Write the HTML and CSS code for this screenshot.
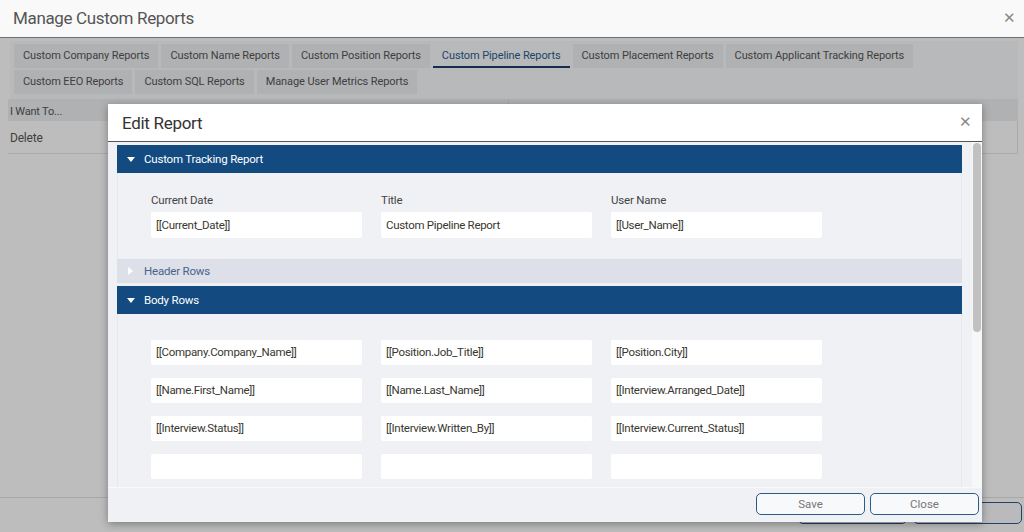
FILE: index.html
```html
<!DOCTYPE html>
<html lang="en">
<head>
<meta charset="UTF-8">
<title>Manage Custom Reports</title>
<link rel="stylesheet" href="styles.css">
</head>
<body>

<div class="outer">
  <div class="outer-head">
    <span class="outer-title">Manage Custom Reports</span>
    <span class="x-btn outer-x">&#x2715;</span>
  </div>

  <div class="outer-body">
    <div class="tabs">
      <div class="tab-row">
        <span class="tab">Custom Company Reports</span>
        <span class="tab">Custom Name Reports</span>
        <span class="tab">Custom Position Reports</span>
        <span class="tab active">Custom Pipeline Reports</span>
        <span class="tab">Custom Placement Reports</span>
        <span class="tab">Custom Applicant Tracking Reports</span>
      </div>
      <div class="tab-row">
        <span class="tab">Custom EEO Reports</span>
        <span class="tab">Custom SQL Reports</span>
        <span class="tab">Manage User Metrics Reports</span>
      </div>
    </div>

    <div class="grid-table">
      <div class="grid-head">
        <span>I Want To...</span>
        <span></span>
      </div>
      <div class="grid-row">Delete</div>
    </div>

    <div class="outer-foot">
      <button class="btn outer-btn">Save</button>
      <button class="btn outer-btn">Close</button>
    </div>

    <div class="backdrop"></div>
  </div>

  <div class="dialog">
    <div class="dialog-head">
      <span class="dialog-title">Edit Report</span>
      <span class="x-btn dialog-x">&#x2715;</span>
    </div>

    <div class="dialog-main">
      <div class="dialog-scroll">
        <div class="section-bar open">
          <svg class="caret" width="8" height="5" viewBox="0 0 8 5"><path d="M0 0h8L4 5z" fill="#fff"/></svg>
          Custom Tracking Report
        </div>
        <div class="section-body first">
          <div class="field">
            <label>Current Date</label>
            <div class="input">[[Current_Date]]</div>
          </div>
          <div class="field">
            <label>Title</label>
            <div class="input">Custom Pipeline Report</div>
          </div>
          <div class="field">
            <label>User Name</label>
            <div class="input">[[User_Name]]</div>
          </div>
        </div>

        <div class="section-bar closed">
          <svg class="caret" width="5" height="8" viewBox="0 0 5 8"><path d="M0 0v8l5-4z" fill="#fff"/></svg>
          Header Rows
        </div>

        <div class="section-bar open">
          <svg class="caret" width="8" height="5" viewBox="0 0 8 5"><path d="M0 0h8L4 5z" fill="#fff"/></svg>
          Body Rows
        </div>
        <div class="section-body rows">
          <div class="input">[[Company.Company_Name]]</div>
          <div class="input">[[Position.Job_Title]]</div>
          <div class="input">[[Position.City]]</div>
          <div class="input">[[Name.First_Name]]</div>
          <div class="input">[[Name.Last_Name]]</div>
          <div class="input">[[Interview.Arranged_Date]]</div>
          <div class="input">[[Interview.Status]]</div>
          <div class="input">[[Interview.Written_By]]</div>
          <div class="input">[[Interview.Current_Status]]</div>
          <div class="input"></div>
          <div class="input"></div>
          <div class="input"></div>
          <div class="input"></div>
          <div class="input"></div>
          <div class="input"></div>
        </div>
      </div>
      <div class="scrollbar"><div class="thumb"></div></div>
    </div>

    <div class="dialog-foot">
      <button class="btn">Save</button>
      <button class="btn">Close</button>
    </div>
  </div>
</div>

</body>
</html>
```

FILE: styles.css
```css
body {
  margin: 0;
  font-family: Roboto, "Liberation Sans", Arial, sans-serif;
  color: #555;
  background-color: #fdfdfe;
}
.outer {
  position: relative;
  height: 532px;
  display: flex;
  flex-direction: column;
  overflow: hidden;
}
.outer-head {
  height: 37px;
  flex: none;
  display: flex;
  align-items: center;
  justify-content: space-between;
  padding: 0 6px 0 13px;
  background-color: #f9f9f9;
  border-bottom: 1px solid #6e6e6e;
}
.outer-title {
  font-size: 17px;
  letter-spacing: -0.35px;
  color: #555;
  margin-top: -2px;
}
.x-btn {
  font-size: 15px;
  color: #888;
  line-height: 1;
}
.outer-x {
  margin-right: 2px;
}
.outer-body {
  position: relative;
  flex: 1;
  display: flex;
  flex-direction: column;
  padding: 3px 6px 0 8px;
}

/* tabs */
.tabs {
  background-color: #f6f7f9;
  padding: 3px 0 3px 4px;
  margin-left: 2px;
}
.tab-row {
  display: flex;
  gap: 3px;
  margin-bottom: 2px;
}
.tab {
  height: 24px;
  line-height: 24px;
  padding: 0 9px;
  font-size: 11px;
  letter-spacing: -0.1px;
  color: #555;
  background-color: #ebecef;
  white-space: nowrap;
}
.tab.active {
  background-color: transparent;
  color: #2a5b8f;
  border-bottom: 2px solid #1b3d6b;
  height: 22px;
}

/* background grid */
.grid-head {
  display: grid;
  grid-template-columns: 500px 1fr;
  height: 22px;
  box-sizing: border-box;
  padding-top: 3px;
  line-height: 20px;
  font-size: 11px;
  letter-spacing: -0.2px;
  background-color: #ebecef;
}
.grid-head span {
  padding-left: 2px;
}
.grid-head span + span {
  border-left: 1px solid #dcdde0;
  margin-top: -3px;
}
.grid-row {
  height: 32px;
  line-height: 34px;
  padding-left: 2px;
  font-size: 12px;
  letter-spacing: -0.2px;
  color: #555;
  border-bottom: 1px solid #e3e3e5;
  border-right: 1px solid #e3e3e5;
}
.outer-foot {
  margin-top: auto;
  height: 35px;
  display: flex;
  justify-content: flex-end;
  align-items: flex-start;
  gap: 6px;
  padding-top: 4px;
  margin-left: -8px;
  margin-right: -6px;
  padding-right: 2px;
  box-sizing: border-box;
  border-top: 1px solid #e0e0e2;
}
.outer-btn {
  width: 107px;
}
.backdrop {
  position: absolute;
  top: 0;
  left: 0;
  right: 0;
  bottom: 0;
  background: rgba(0, 0, 0, 0.25);
}

/* nested dialog */
.dialog {
  position: absolute;
  left: 108px;
  top: 104px;
  width: 874px;
  height: 418px;
  display: flex;
  flex-direction: column;
  background-color: #f0f1f5;
  box-shadow: 0 2px 8px rgba(0, 0, 0, 0.35);
}
.dialog-head {
  height: 37px;
  flex: none;
  display: flex;
  align-items: center;
  justify-content: space-between;
  padding: 0 10px 0 14px;
  background-color: #fff;
  border-bottom: 1px solid #555;
}
.dialog-title {
  font-size: 17px;
  letter-spacing: -0.3px;
  color: #333;
}
.dialog-x {
  font-size: 15px;
  color: #8a8a8a;
}
.dialog-main {
  height: 345px;
  flex: none;
  display: flex;
}
.dialog-scroll {
  flex: 1;
  overflow: hidden;
  padding: 3px 10px 0 9px;
}
.scrollbar {
  width: 10px;
  flex: none;
  background-color: #f6f7f9;
}
.thumb {
  width: 8px;
  height: 189px;
  margin: 1px 0 0 1px;
  border-radius: 4px;
  background-color: #c1c1c1;
}
.section-bar {
  display: flex;
  align-items: center;
  gap: 9px;
  padding-left: 10px;
  font-size: 11.5px;
  letter-spacing: -0.2px;
}
.section-bar.open {
  height: 28px;
  background-color: #134a80;
  color: #fff;
}
.section-bar.closed {
  height: 24px;
  background-color: #dde0e8;
  color: #47648c;
}
.section-bar.closed .caret {
  margin: 0 2px 0 1px;
}
.section-bar + .section-bar {
  margin-top: 3px;
}
.section-body {
  display: grid;
  grid-template-columns: repeat(3, 211px);
  column-gap: 19px;
  border-left: 1px solid #e6e8ee;
  border-right: 1px solid #e6e8ee;
}
.section-body.first {
  padding: 20px 33px 21px;
}
.section-body.rows {
  row-gap: 13px;
  padding: 26px 33px 20px;
}
.field label {
  display: block;
  font-size: 11.5px;
  letter-spacing: -0.2px;
  line-height: 14px;
  color: #444;
  margin-bottom: 5px;
}
.input {
  height: 25px;
  line-height: 25px;
  padding: 0 5px;
  background-color: #fff;
  border-radius: 2px;
  font-size: 11.5px;
  letter-spacing: -0.3px;
  color: #383830;
  white-space: nowrap;
}
.field .input {
  height: 26px;
  line-height: 26px;
}
.dialog-foot {
  flex: 1;
  display: flex;
  justify-content: flex-end;
  align-items: flex-start;
  gap: 5px;
  padding: 5px 3px 0 0;
  border-top: 1px solid #f8f9fb;
}
.btn {
  width: 109px;
  height: 22px;
  font-family: inherit;
  font-size: 11.5px;
  color: #777;
  background-color: #f8f9fb;
  border: 1.5px solid #2e5a8a;
  border-radius: 5px;
  padding: 0;
}
```
